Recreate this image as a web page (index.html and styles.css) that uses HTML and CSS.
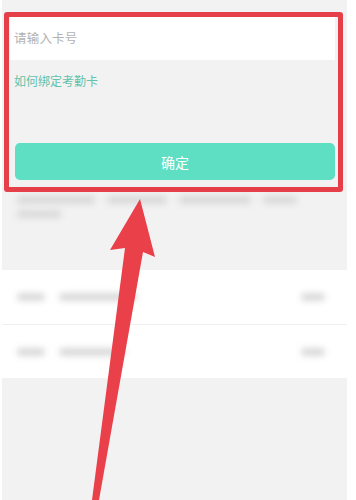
FILE: index.html
```html
<!DOCTYPE html>
<html lang="zh-CN">
<head>
<meta charset="utf-8">
<title>绑定考勤卡</title>
<link rel="stylesheet" href="styles.css">
</head>
<body>
<div class="screen">
  <div class="input-row"><span class="hint">请输入卡号</span></div>
  <div class="help">如何绑定考勤卡</div>
  <div class="btn">确定</div>
  <div class="notice">
    <div class="line">
      <span class="blob" style="width:78px"></span>
      <span class="blob" style="width:60px"></span>
      <span class="blob" style="width:72px"></span>
      <span class="blob" style="width:34px"></span>
    </div>
    <div class="line"><span class="blob" style="width:44px"></span></div>
  </div>
  <div class="list">
    <div class="row">
      <span class="blob" style="width:28px"></span>
      <span class="blob" style="width:78px"></span>
      <span class="spacer"></span>
      <span class="blob" style="width:24px"></span>
    </div>
    <div class="row">
      <span class="blob" style="width:28px"></span>
      <span class="blob" style="width:66px"></span>
      <span class="spacer"></span>
      <span class="blob" style="width:24px"></span>
    </div>
  </div>
</div>
<div class="highlight"></div>
<svg class="arrow" width="356" height="500" viewBox="0 0 356 500">
  <polygon points="140,199 155,257 143,252 99,500 92,500 125,248 110,250" fill="#e9404a"/>
</svg>
</body>
</html>
```
FILE: styles.css
```css
html, body {
  margin: 0;
  padding: 0;
  background: #ffffff;
  font-family: "Noto Sans CJK SC", "Noto Sans", sans-serif;
}
body {
  width: 356px;
  height: 500px;
  overflow: hidden;
  position: relative;
}
.screen {
  margin-left: 2px;
  width: 345px;
  height: 500px;
  background: #f2f2f2;
  padding-top: 17px;
  box-sizing: border-box;
}
.input-row {
  margin: 0 12px 0 8px;
  height: 43px;
  background: #ffffff;
  display: flex;
  align-items: center;
  padding: 0 0 3px 4px;
  box-sizing: border-box;
}
.hint {
  font-size: 12.5px;
  color: #b2b2b2;
  letter-spacing: 0.2px;
}
.help {
  height: 40px;
  padding-left: 12px;
  display: flex;
  align-items: center;
  font-size: 12px;
  color: #62c2ab;
}
.btn {
  margin: 43px 12px 0 13px;
  height: 37px;
  border-radius: 5px;
  background: #5edfc4;
  color: #ffffff;
  font-size: 14px;
  display: flex;
  align-items: center;
  justify-content: center;
}
.notice {
  height: 90px;
  padding: 16px 0 0 15px;
  box-sizing: border-box;
  display: flex;
  flex-direction: column;
  gap: 6px;
}
.line {
  display: flex;
  gap: 12px;
}
.blob {
  display: block;
  height: 8px;
  border-radius: 4px;
  background: #d9d9d9;
  filter: blur(3px);
}
.list {
  background: #ffffff;
  height: 108px;
  display: flex;
  flex-direction: column;
}
.row {
  height: 54px;
  display: flex;
  align-items: center;
  gap: 14px;
  padding: 0 22px 0 15px;
  box-sizing: border-box;
}
.row + .row {
  border-top: 1px solid #f0f0f0;
}
.spacer {
  flex: 1;
}
.highlight {
  position: absolute;
  left: 4px;
  top: 12px;
  width: 339px;
  height: 180px;
  border: 5px solid #e5404a;
  border-radius: 3px;
  box-sizing: border-box;
}
.arrow {
  position: absolute;
  left: 0;
  top: 0;
}
```
